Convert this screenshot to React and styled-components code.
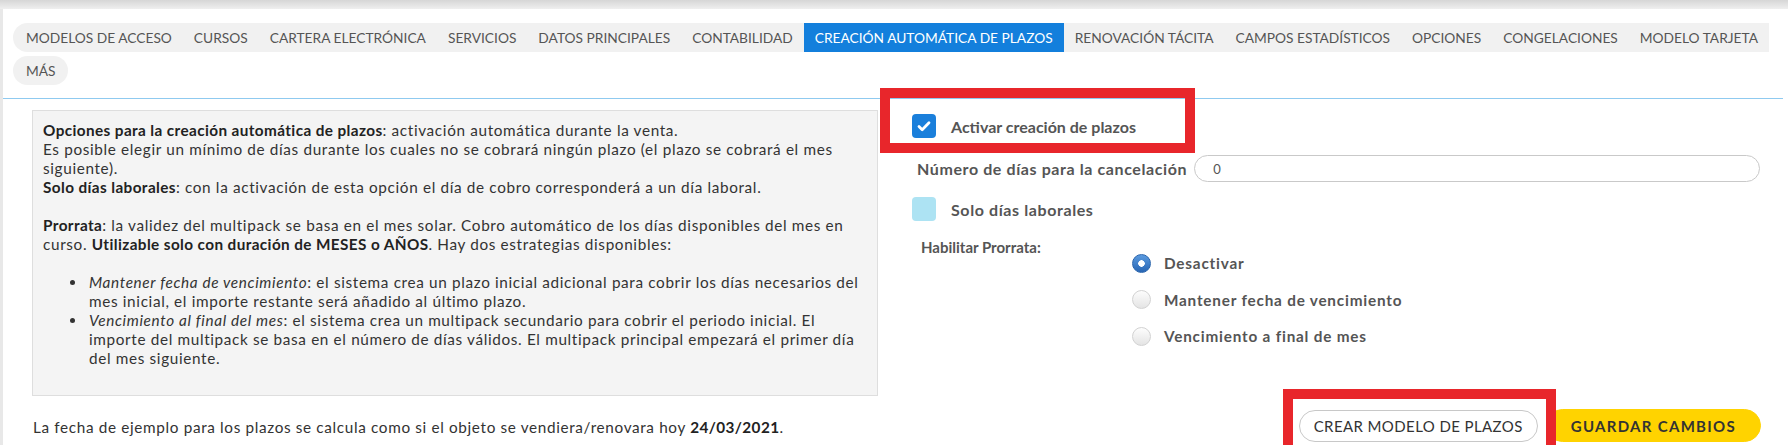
import styled, { createGlobalStyle } from "styled-components";

const GlobalStyle = createGlobalStyle`
  html, body {
    margin: 0;
    padding: 0;
    background: #e9e9e9;
    font-family: Lato, "Liberation Sans", sans-serif;
  }
`;

const Page = styled.div`
  position: relative;
  height: 445px;
  overflow: hidden;
  padding: 9px 0 0 3px;
  box-sizing: border-box;
  background: linear-gradient(to bottom, #d6d6d6 0, #efefef 9px, #e8e8e8 9px);
`;

const Card = styled.div`
  background: #fff;
  height: 100%;
  display: flex;
  flex-direction: column;
`;

const TabList = styled.div`
  display: flex;
  flex-wrap: wrap;
  row-gap: 4px;
  width: 1770px;
  padding: 14px 0 0 10px;
`;

const Tab = styled.div`
  height: 29px;
  display: flex;
  align-items: center;
  padding: 0 11px;
  font-size: 13.75px;
  text-transform: uppercase;
  color: ${(p) => (p.active ? "#fff" : "#555")};
  background: ${(p) => (p.active ? "#137fdc" : "#f1f1f1")};
  white-space: nowrap;
  &:first-child {
    padding-left: 13px;
    border-radius: 15px 0 0 15px;
  }
`;

const MoreTab = styled(Tab)`
  padding: 0 12px 0 13px;
  border-radius: 15px;
`;

const Divider = styled.div`
  height: 1px;
  background: #8fcaf0;
  margin: 13px 5px 0 0;
`;

const Main = styled.div`
  display: flex;
  align-items: flex-start;
`;

const InfoBox = styled.div`
  width: 824px;
  margin: 11px 0 0 29px;
  padding: 10px 10px 13px;
  background: #f4f4f4;
  border: 1px solid #dedede;
  font-size: 15.3px;
  letter-spacing: 0.65px;
  line-height: 19px;
  color: #333;
  p {
    margin: 0;
  }
  b {
    font-weight: 700;
    color: #222;
    letter-spacing: 0.4px;
  }
`;

const Gap = styled.div`
  height: 19px;
`;

const Strategies = styled.ul`
  margin: 19px 0 14px;
  padding-left: 44px;
  li {
    padding-left: 2px;
  }
`;

const Settings = styled.div`
  flex: 1;
  padding: 15px 28px 0 34px;
  color: #555;
  font-weight: 700;
`;

const CheckRow = styled.label`
  display: flex;
  align-items: center;
  gap: 15px;
  height: 24px;
  font-size: 16px;
  letter-spacing: ${(p) => p.spacing || 0}px;
`;

const Box = styled.span`
  width: 24px;
  height: 24px;
  border-radius: 4px;
  background: ${(p) => (p.checked ? "#1a7fdb" : "#ade3f3")};
  display: flex;
  align-items: center;
  justify-content: center;
`;

const FieldRow = styled.div`
  display: flex;
  align-items: center;
  gap: 7px;
  margin: 17px 0 15px 5px;
  font-size: 16px;
  letter-spacing: 0.6px;
`;

const TextInput = styled.div`
  flex: 1;
  height: 27px;
  box-sizing: border-box;
  border: 1px solid #c9c9c9;
  border-radius: 14px;
  padding-left: 18px;
  display: flex;
  align-items: center;
  font-size: 13px;
  font-weight: 400;
  color: #555;
`;

const ProrrataRow = styled.div`
  display: flex;
  align-items: flex-start;
  margin: 16px 0 0 9px;
`;

const ProrrataLabel = styled.div`
  width: 211px;
  font-size: 15px;
  line-height: 20px;
`;

const RadioList = styled.div`
  padding-top: 8px;
  display: flex;
  flex-direction: column;
`;

const RadioRow = styled.div`
  display: flex;
  align-items: center;
  gap: 13px;
  height: 36.5px;
  font-size: 15.3px;
  letter-spacing: 0.8px;
`;

const Radio = styled.span`
  width: 19px;
  height: 19px;
  box-sizing: border-box;
  border-radius: 50%;
  ${(p) =>
    p.checked
      ? `
    background: radial-gradient(circle, #fff 0 3px, transparent 3.5px),
      linear-gradient(to bottom, #5b9be0, #2866b4);
    border: 1px solid #2a65ad;
  `
      : `
    background: linear-gradient(to bottom, #fdfdfd, #e4e4e4);
    border: 1px solid #d2d2d2;
  `}
`;

const Footer = styled.div`
  display: flex;
  align-items: flex-end;
  justify-content: space-between;
  margin-top: 13px;
  padding: 0 27px 0 30px;
`;

const Note = styled.div`
  font-size: 15.3px;
  letter-spacing: 0.65px;
  color: #333;
  padding-bottom: 6px;
  b {
    color: #222;
    letter-spacing: 0.4px;
  }
`;

const Buttons = styled.div`
  display: flex;
  align-items: center;
  gap: 8px;
`;

const Button = styled.button`
  height: ${(p) => (p.primary ? 33 : 32)}px;
  padding: 0 ${(p) => (p.primary ? 24 : 14)}px;
  border-radius: 17px;
  font-family: inherit;
  font-size: 15px;
  letter-spacing: ${(p) => (p.primary ? "1.3px" : "0.4px")};
  font-weight: ${(p) => (p.primary ? 700 : 400)};
  color: #333;
  background: ${(p) => (p.primary ? "#ffd300" : "#fff")};
  border: 1px solid ${(p) => (p.primary ? "#ffd300" : "#c8c8c8")};
`;

const Highlight = styled.div`
  position: absolute;
  left: ${(p) => p.x}px;
  top: ${(p) => p.y}px;
  width: ${(p) => p.w}px;
  height: ${(p) => p.h}px;
  box-sizing: border-box;
  border: 10px solid #e8262b;
  pointer-events: none;
`;

const tabs = [
  "Modelos de acceso",
  "Cursos",
  "Cartera electrónica",
  "Servicios",
  "Datos principales",
  "Contabilidad",
  "Creación automática de plazos",
  "Renovación tácita",
  "Campos estadísticos",
  "Opciones",
  "Congelaciones",
  "Modelo tarjeta",
];

const prorrata = ["Desactivar", "Mantener fecha de vencimiento", "Vencimiento a final de mes"];

const CheckIcon = () => (
  <svg width="16" height="16" viewBox="0 0 16 16">
    <path d="M3 8.5l3.2 3.2L13 4.8" fill="none" stroke="#fff" strokeWidth="2.8" strokeLinecap="round" strokeLinejoin="round" />
  </svg>
);

export default function App() {
  return (
    <>
      <GlobalStyle />
      <Page>
        <Card>
          <TabList>
            {tabs.map((t) => (
              <Tab key={t} active={t === "Creación automática de plazos"}>
                {t}
              </Tab>
            ))}
            <MoreTab>Más</MoreTab>
          </TabList>
          <Divider />
          <Main>
            <InfoBox>
              <p>
                <b>Opciones para la creación automática de plazos</b>: activación automática durante la venta.
                <br />
                Es posible elegir un mínimo de días durante los cuales no se cobrará ningún plazo (el plazo se cobrará el mes siguiente).
                <br />
                <b>Solo días laborales</b>: con la activación de esta opción el día de cobro corresponderá a un día laboral.
              </p>
              <Gap />
              <p>
                <b>Prorrata</b>: la validez del multipack se basa en el mes solar. Cobro automático de los días disponibles del mes en curso.{" "}
                <b>Utilizable solo con duración de MESES o AÑOS</b>. Hay dos estrategias disponibles:
              </p>
              <Strategies>
                <li>
                  <i>Mantener fecha de vencimiento</i>: el sistema crea un plazo inicial adicional para cobrir los días necesarios del mes inicial, el importe restante será añadido al último plazo.
                </li>
                <li>
                  <i>Vencimiento al final del mes</i>: el sistema crea un multipack secundario para cobrir el periodo inicial. El importe del multipack se basa en el número de días válidos. El multipack principal empezará el primer día del mes siguiente.
                </li>
              </Strategies>
            </InfoBox>
            <Settings>
              <CheckRow>
                <Box checked>
                  <CheckIcon />
                </Box>
                Activar creación de plazos
              </CheckRow>
              <FieldRow>
                Número de días para la cancelación
                <TextInput>0</TextInput>
              </FieldRow>
              <CheckRow spacing={0.6}>
                <Box />
                Solo días laborales
              </CheckRow>
              <ProrrataRow>
                <ProrrataLabel>Habilitar Prorrata:</ProrrataLabel>
                <RadioList>
                  {prorrata.map((r, i) => (
                    <RadioRow key={r}>
                      <Radio checked={i === 0} />
                      {r}
                    </RadioRow>
                  ))}
                </RadioList>
              </ProrrataRow>
            </Settings>
          </Main>
          <Footer>
            <Note>
              La fecha de ejemplo para los plazos se calcula como si el objeto se vendiera/renovara hoy <b>24/03/2021</b>.
            </Note>
            <Buttons>
              <Button>CREAR MODELO DE PLAZOS</Button>
              <Button primary>GUARDAR CAMBIOS</Button>
            </Buttons>
          </Footer>
        </Card>
        <Highlight x={880} y={88} w={315} h={65} />
        <Highlight x={1283} y={389} w={273} h={66} />
      </Page>
    </>
  );
}
